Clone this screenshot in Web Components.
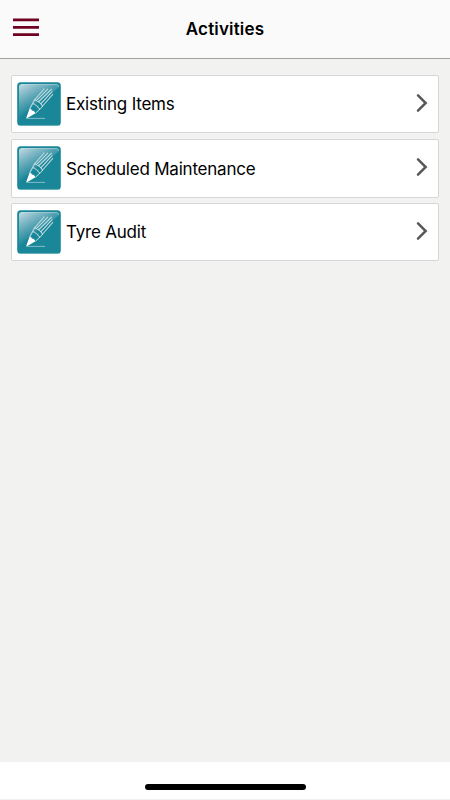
<!DOCTYPE html>
<html lang="en">
<head>
<meta charset="utf-8">
<title>Activities</title>
<style>
html,body{margin:0;height:100%}
body{font-family:Inter,"Liberation Sans",sans-serif;color:#000}
</style>
</head>
<body>
<activities-screen>
  <app-header slot="header">Activities</app-header>
  <activity-row>Existing Items</activity-row>
  <activity-row>Scheduled Maintenance</activity-row>
  <activity-row>Tyre Audit</activity-row>
</activities-screen>
<script>
const define = (name, html) => customElements.define(name, class extends HTMLElement {
  constructor() {
    super();
    this.attachShadow({ mode: 'open' }).innerHTML = html;
  }
});

define('menu-icon', `
<style>:host{display:block;width:26px;height:19px}svg{display:block}</style>
<svg width="26" height="19" viewBox="0 0 26 19">
  <path d="M0 1.9H26M0 9.4H26M0 16.6H26" stroke="#720020" stroke-width="2.9"/>
</svg>`);

define('app-header', `
<style>
:host{display:grid;grid-template-columns:1fr auto 1fr;box-sizing:border-box;height:59px;padding:0 13px;background:#fafafa;border-bottom:1px solid #a0a0a0}
menu-icon{margin-top:18px}
h1{margin:19px 0 0;font-size:17px;line-height:21px;font-weight:600;letter-spacing:.16px}
</style>
<menu-icon></menu-icon><h1><slot></slot></h1>`);

define('pencil-icon', `
<style>:host{display:block;width:44px;height:44px}svg{display:block}</style>
<svg width="44" height="44" viewBox="0 0 44 44" fill="none">
  <defs>
    <linearGradient id="g" gradientUnits="userSpaceOnUse" x1="5" y1="1" x2="20" y2="27">
      <stop offset="0" stop-color="#d3e2ea" stop-opacity=".92"/>
      <stop offset=".45" stop-color="#b9d3de" stop-opacity=".55"/>
      <stop offset="1" stop-color="#9cc5d0" stop-opacity="0"/>
    </linearGradient>
  </defs>
  <rect x=".2" y=".2" width="43.6" height="43.6" rx="3.5" fill="#1a8799"/>
  <path d="M2 5Q2 2 5 2H39Q42 2 42 5Q38 9 30 14Q14 23 2 37Z" fill="url(#g)"/>
  <path d="M4 2.5H39Q41.5 2.5 41.7 5" stroke="#c5dee5" stroke-opacity=".6" stroke-width=".8"/>
  <path d="M1 43.4H43" stroke="#8ac4cd" stroke-opacity=".5" stroke-width=".8"/>
  <path d="M12.5 27.5L17.2 18.3L27.5 6.5M19.6 18.3L31 6.8M21.5 20L34.8 6.8M23.6 22L35.4 9.4M25.2 24.5L36 12.2" stroke="#d1e5ea" stroke-opacity=".85" stroke-width="1.1"/>
  <path d="M17.2 18.5Q19.2 17.2 20.6 19.6Q23 19.5 23.6 22Q26 22.5 25.2 25L18.5 31.2M15.8 22Q17.9 21.2 18.6 23.4Q21 23.4 21.3 26.1Q23 26.2 22.7 27.6" stroke="#e0edf1" stroke-opacity=".9" stroke-width=".9"/>
  <path d="M12.3 27.2Q14.2 26.4 14.9 28.4Q17.4 28.2 18.5 31.2L9 36.7Z" fill="#fff"/>
  <path d="M10 36.4H28" stroke="#9acbd2" stroke-width=".8"/>
</svg>`);

define('chevron-icon', `
<style>:host{display:block;width:12px;height:20px}svg{display:block}</style>
<svg width="12" height="20" viewBox="0 0 12 20" fill="none">
  <path d="M2 2.3L9.7 10L2 17.7" stroke="#58585a" stroke-width="2.5" stroke-linecap="round"/>
</svg>`);

define('activity-row', `
<style>
:host{display:flex;align-items:flex-start;box-sizing:border-box;height:58px;padding:6px 10px 0 5px;background:#fff;border:1px solid #d6d6d8;border-radius:2px}
:host(:nth-of-type(2)){height:59px;margin-bottom:-1px}
span{flex:1;margin:10px 0 0 5px;font-size:17px;line-height:24px;letter-spacing:-.21px;white-space:nowrap}
:host(:nth-of-type(2)) span{margin-top:11px}
chevron-icon{margin-top:11px}
</style>
<pencil-icon></pencil-icon><span><slot></slot></span><chevron-icon></chevron-icon>`);

define('home-bar', `
<style>
:host{display:flex;justify-content:center;box-sizing:border-box;height:38px;padding-top:22px;background:#fff;border-bottom:1px solid #f2f2f2}
i{width:161px;height:6px;border-radius:3px;background:#000}
</style><i></i>`);

define('activities-screen', `
<style>
:host{display:flex;flex-direction:column;height:800px;background:#f2f2f0}
main{flex:1;display:flex;flex-direction:column;gap:6px;padding:16px 11px}
</style>
<slot name="header"></slot><main><slot></slot></main><home-bar></home-bar>`);
</script>
</body>
</html>
